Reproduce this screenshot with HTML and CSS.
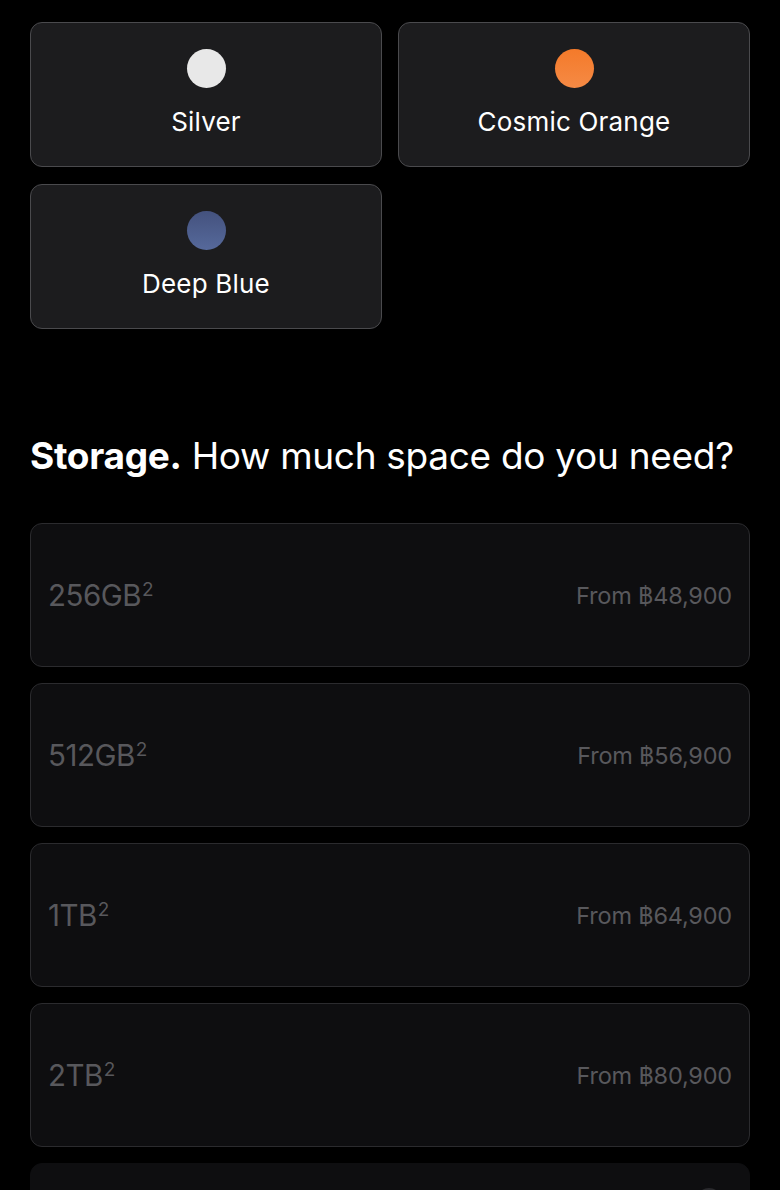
FILE: index.html
```html
<!DOCTYPE html>
<html lang="en">

<head>
    <meta charset="UTF-8">
    <meta name="viewport" content="width=device-width, initial-scale=1.0">
    <title>Buy iPhone</title>
    <link rel="stylesheet" href="styles.css">
</head>

<body>
    <section class="finish">
        <div class="finish-box">
            <span class="swatch silver"></span>
            <span class="finish-name">Silver</span>
        </div>
        <div class="finish-box">
            <span class="swatch orange"></span>
            <span class="finish-name">Cosmic Orange</span>
        </div>
        <div class="finish-box">
            <span class="swatch blue"></span>
            <span class="finish-name">Deep Blue</span>
        </div>
    </section>

    <h2 class="title"><b>Storage.</b> How much space do you need?</h2>

    <section class="storage">
        <div class="storage-box">
            <span class="size">256GB<sup>2</sup></span>
            <span class="price">From ฿48,900</span>
        </div>
        <div class="storage-box">
            <span class="size">512GB<sup>2</sup></span>
            <span class="price">From ฿56,900</span>
        </div>
        <div class="storage-box">
            <span class="size">1TB<sup>2</sup></span>
            <span class="price">From ฿64,900</span>
        </div>
        <div class="storage-box">
            <span class="size">2TB<sup>2</sup></span>
            <span class="price">From ฿80,900</span>
        </div>
        <div class="storage-box more">
            <span class="info"></span>
        </div>
    </section>
</body>

</html>
```

FILE: styles.css
```css
body {
    margin: 0;
    padding: 22px 30px 0;
    background-color: black;
    color: white;
    font-family: Inter, "Noto Sans", sans-serif;
    overflow: hidden;
    height: 1190px;
    box-sizing: border-box;
}

.finish {
    display: grid;
    grid-template-columns: repeat(2, 1fr);
    gap: 17px 16px;
}

.finish-box {
    height: 145px;
    box-sizing: border-box;
    background-color: #1c1c1e;
    border: 1.5px solid #4a4a4d;
    border-radius: 12px;
    display: flex;
    flex-direction: column;
    align-items: center;
    padding-top: 26px;
}

.swatch {
    width: 39px;
    height: 39px;
    border-radius: 50%;
}

.silver {
    background-color: #e8e8e8;
}

.orange {
    background: linear-gradient(#f47a2a, #f58a45);
}

.blue {
    background: linear-gradient(#44527e, #56699b);
}

.finish-name {
    margin-top: 18px;
    font-size: 26px;
    letter-spacing: 0.2px;
}

.title {
    margin: 104px 0 45px;
    font-size: 37px;
    font-weight: 400;
    letter-spacing: -0.3px;
}

.title b {
    font-weight: 700;
}

.storage {
    display: flex;
    flex-direction: column;
    gap: 16px;
}

.storage-box {
    height: 144px;
    box-sizing: border-box;
    background-color: #0e0e10;
    border: 1.5px solid #2b2b2e;
    border-radius: 12px;
    display: flex;
    justify-content: space-between;
    align-items: center;
    padding: 0 17px;
    color: #58585c;
    flex-shrink: 0;
}

.size {
    font-size: 29.5px;
    letter-spacing: -0.5px;
}

.size sup {
    font-size: 19px;
    vertical-align: 10px;
    line-height: 0;
    margin-left: 1px;
}

.price {
    font-size: 23.5px;
    letter-spacing: -0.2px;
}

.more {
    border-color: #0e0e10;
    justify-content: flex-end;
    align-items: flex-start;
    padding: 24px 27px;
}

.info {
    width: 26px;
    height: 26px;
    border-radius: 50%;
    background-color: #2a2a2d;
}
```
